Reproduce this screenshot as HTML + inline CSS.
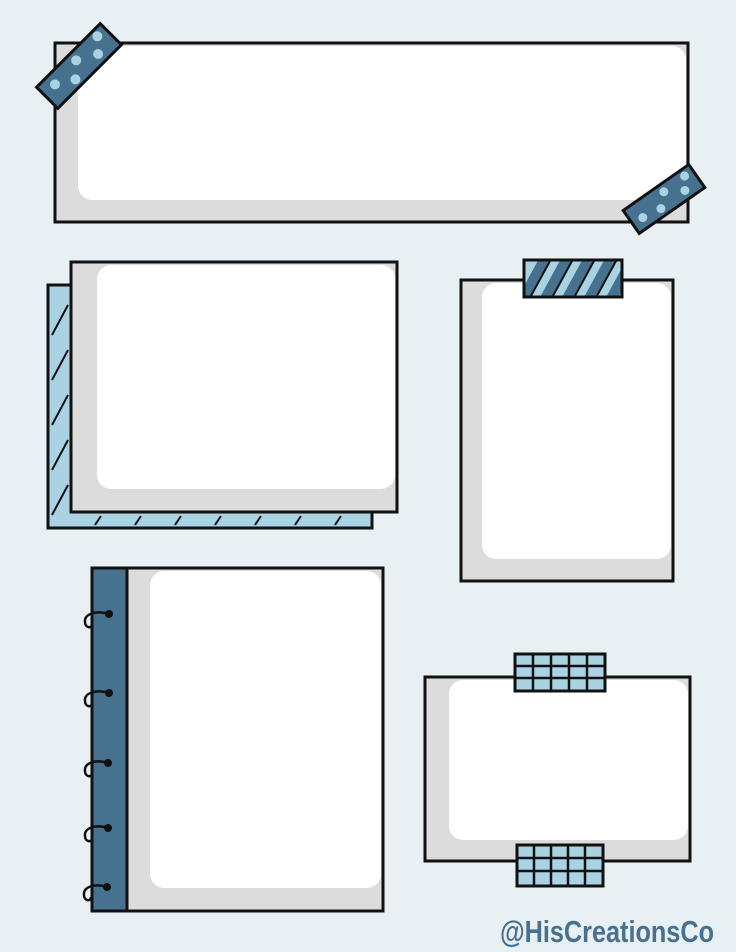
<!DOCTYPE html>
<html><head><meta charset="utf-8"><style>
html,body{margin:0;padding:0;background:#e8f0f4;}
svg{display:block}
</style></head><body>
<svg width="736" height="952" viewBox="0 0 736 952" xmlns="http://www.w3.org/2000/svg">
<defs>
<clipPath id="cs"><rect x="524" y="260" width="98" height="37"/></clipPath>
<clipPath id="cg1"><rect x="515" y="654" width="90" height="37"/></clipPath>
<clipPath id="cg2"><rect x="517" y="845" width="86" height="41"/></clipPath>
</defs>
<rect width="736" height="952" fill="#e8f0f4"/>

<!-- Box 1 -->
<rect x="55" y="43" width="633" height="179" fill="#dcdcdc" stroke="#111" stroke-width="3"/>
<rect x="78" y="46" width="608" height="154" rx="14" fill="#fff"/>
<path d="M55 43 H688 V222 H55 Z" fill="none" stroke="#111" stroke-width="3"/>
<g transform="translate(79,66) rotate(-45)">
<rect x="-45" y="-15" width="90" height="30" fill="#46718f" stroke="#111" stroke-width="3"/>
<circle cx="-30" cy="-4" r="5" fill="#a9d3e3"/><circle cx="-12" cy="7" r="5" fill="#a9d3e3"/>
<circle cx="2" cy="-6" r="5" fill="#a9d3e3"/><circle cx="22" cy="5" r="5" fill="#a9d3e3"/>
<circle cx="34" cy="-8" r="5" fill="#a9d3e3"/>
</g>
<g transform="translate(664,199) rotate(-35)">
<rect x="-40" y="-14" width="80" height="28" fill="#46718f" stroke="#111" stroke-width="3"/>
<circle cx="-28" cy="3" r="4.5" fill="#a9d3e3"/><circle cx="-8" cy="6" r="4.5" fill="#a9d3e3"/>
<circle cx="4" cy="-6" r="4.5" fill="#a9d3e3"/><circle cx="22" cy="5" r="4.5" fill="#a9d3e3"/>
<circle cx="30" cy="-7" r="4.5" fill="#a9d3e3"/>
</g>

<!-- Box 2 stack -->
<rect x="48" y="285" width="324" height="243" fill="#a9d3e3" stroke="#111" stroke-width="3"/>
<g stroke="#111" stroke-width="2">
<path d="M52 335 L68 305 M52 380 L68 350 M52 425 L68 395 M52 470 L68 440 M52 515 L68 485"/>
<path d="M95 525 L101 516 M135 525 L141 516 M175 525 L181 516 M215 525 L221 516 M255 525 L261 516 M295 525 L301 516 M335 525 L341 516"/>
</g>
<rect x="71" y="262" width="326" height="250" fill="#dcdcdc" stroke="#111" stroke-width="3"/>
<rect x="97" y="265" width="298" height="224" rx="14" fill="#fff"/>
<rect x="71" y="262" width="326" height="250" fill="none" stroke="#111" stroke-width="3"/>

<!-- Box 3 -->
<rect x="461" y="280" width="212" height="301" fill="#dcdcdc" stroke="#111" stroke-width="3"/>
<rect x="482" y="283" width="189" height="276" rx="14" fill="#fff"/>
<rect x="461" y="280" width="212" height="301" fill="none" stroke="#111" stroke-width="3"/>
<rect x="524" y="260" width="98" height="37" fill="#a9d3e3"/>
<g clip-path="url(#cs)" stroke="#46718f" stroke-width="11">
<path d="M520 305 L550 250 M542 305 L572 250 M564 305 L594 250 M586 305 L616 250 M608 305 L638 250"/>
</g>
<g clip-path="url(#cs)" stroke="#111" stroke-width="2">
<path d="M526 305 L556 250 M548 305 L578 250 M570 305 L600 250 M592 305 L622 250"/>
</g>
<rect x="524" y="260" width="98" height="37" fill="none" stroke="#111" stroke-width="3"/>

<!-- Box 4 notebook -->
<rect x="92" y="568" width="291" height="343" fill="#dcdcdc" stroke="#111" stroke-width="3"/>
<rect x="150" y="571" width="231" height="317" rx="14" fill="#fff"/>
<rect x="92" y="568" width="35" height="343" fill="#46718f" stroke="#111" stroke-width="3"/>
<rect x="92" y="568" width="291" height="343" fill="none" stroke="#111" stroke-width="3"/>
<g fill="none" stroke="#111" stroke-width="2.5">
<path d="M109 614 C96 610 84 614 85 622 C85 628 92 629 92 624"/>
<path d="M109 693 C96 689 84 693 85 701 C85 707 92 708 92 703"/>
<path d="M108 763 C95 759 84 763 85 771 C85 777 92 778 92 773"/>
<path d="M108 828 C95 824 84 828 85 836 C85 842 92 843 92 838"/>
<path d="M107 887 C94 883 83 887 84 895 C84 901 91 902 91 897"/>
</g>
<g fill="#111"><circle cx="109" cy="614" r="4"/><circle cx="109" cy="693" r="4"/><circle cx="108" cy="763" r="4"/><circle cx="108" cy="828" r="4"/><circle cx="107" cy="887" r="4"/></g>

<!-- Box 5 -->
<rect x="425" y="677" width="265" height="184" fill="#dcdcdc" stroke="#111" stroke-width="3"/>
<rect x="449" y="680" width="239" height="160" rx="14" fill="#fff"/>
<rect x="425" y="677" width="265" height="184" fill="none" stroke="#111" stroke-width="3"/>
<rect x="515" y="654" width="90" height="37" fill="#a9d3e3"/>
<g clip-path="url(#cg1)" stroke="#111" stroke-width="2.5">
<path d="M515 666 H605 M515 678 H605 M533 654 V691 M551 654 V691 M569 654 V691 M587 654 V691"/>
</g>
<rect x="515" y="654" width="90" height="37" fill="none" stroke="#111" stroke-width="3"/>
<rect x="517" y="845" width="86" height="41" fill="#a9d3e3"/>
<g clip-path="url(#cg2)" stroke="#111" stroke-width="2.5">
<path d="M517 858 H603 M517 871 H603 M534 845 V886 M551 845 V886 M568 845 V886 M585 845 V886"/>
</g>
<rect x="517" y="845" width="86" height="41" fill="none" stroke="#111" stroke-width="3"/>

<text x="500" y="942" font-family="Liberation Sans, sans-serif" font-size="31" font-weight="bold" fill="#46718f" textLength="214" lengthAdjust="spacingAndGlyphs">@HisCreationsCo</text>
</svg>
</body></html>
